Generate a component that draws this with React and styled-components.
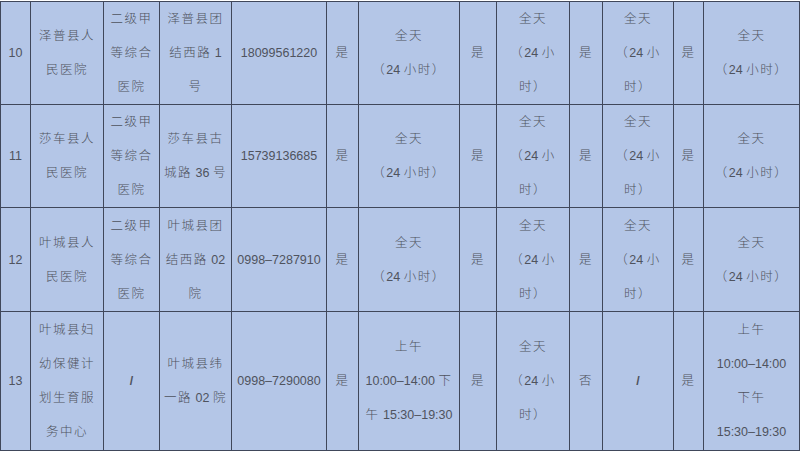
import React from "react";
import styled, { createGlobalStyle } from "styled-components";

const GlobalStyle = createGlobalStyle`
  html, body { margin: 0; padding: 0; background: #ffffff; }
  #root { padding-top: 1px; }
`;

const Table = styled.table`
  border-collapse: collapse;
  table-layout: fixed;
  width: 799px;
  background: #b4c6e7;
  font-family: "Liberation Sans", "Noto Sans CJK SC", sans-serif;
  font-size: 12.5px;
  color: #4f535e;
`;

const Col = styled.col`
  width: ${(p) => p.$w}px;
`;

const Row = styled.tr`
  height: ${(p) => p.$h}px;
`;

const Cell = styled.td`
  border: 1px solid #40475a;
  padding: 0;
  text-align: center;
  vertical-align: middle;
  line-height: 34px;
  white-space: nowrap;
  overflow: hidden;
`;

const Line = styled.div`
  font-weight: ${(p) => (p.$slash ? 700 : 400)};
`;

const Cjk = styled.span`
  letter-spacing: 1.5px;
  font-weight: 300;
`;

const widths = [30, 73, 56, 72, 95, 32, 101, 37, 73, 33, 71, 30, 96];

const full = ["全天", "（24 小时）"];
const split = ["全天", "（24 小", "时）"];

const rows = [
  {
    h: 103,
    cells: [
      ["10"],
      ["泽普县人", "民医院"],
      ["二级甲", "等综合", "医院"],
      ["泽普县团", "结西路 1", "号"],
      ["18099561220"],
      ["是"],
      full,
      ["是"],
      split,
      ["是"],
      split,
      ["是"],
      full,
    ],
  },
  {
    h: 103,
    cells: [
      ["11"],
      ["莎车县人", "民医院"],
      ["二级甲", "等综合", "医院"],
      ["莎车县古", "城路 36 号"],
      ["15739136685"],
      ["是"],
      full,
      ["是"],
      split,
      ["是"],
      split,
      ["是"],
      full,
    ],
  },
  {
    h: 104,
    cells: [
      ["12"],
      ["叶城县人", "民医院"],
      ["二级甲", "等综合", "医院"],
      ["叶城县团", "结西路 02", "院"],
      ["0998–7287910"],
      ["是"],
      full,
      ["是"],
      split,
      ["是"],
      split,
      ["是"],
      full,
    ],
  },
  {
    h: 139,
    cells: [
      ["13"],
      ["叶城县妇", "幼保健计", "划生育服", "务中心"],
      ["/"],
      ["叶城县纬", "一路 02 院"],
      ["0998–7290080"],
      ["是"],
      ["上午", "10:00–14:00 下", "午 15:30–19:30"],
      ["是"],
      split,
      ["否"],
      ["/"],
      ["是"],
      ["上午", "10:00–14:00", "下午", "15:30–19:30"],
    ],
  },
];

const cjkRe = /([\u3000-\u9fff\uff00-\uffef]+)/;

function Text({ value }) {
  const parts = value.split(cjkRe).filter((s) => s !== "");
  return parts.map((part, i) =>
    cjkRe.test(part) ? <Cjk key={i}>{part}</Cjk> : <React.Fragment key={i}>{part}</React.Fragment>
  );
}

export default function App() {
  return (
    <>
      <GlobalStyle />
      <Table>
        <colgroup>
          {widths.map((w, i) => (
            <Col key={i} $w={w} />
          ))}
        </colgroup>
        <tbody>
          {rows.map((row, r) => (
            <Row key={r} $h={row.h}>
              {row.cells.map((lines, c) => (
                <Cell key={c}>
                  {lines.map((l, k) => (
                    <Line key={k} $slash={l === "/"}>
                      <Text value={l} />
                    </Line>
                  ))}
                </Cell>
              ))}
            </Row>
          ))}
        </tbody>
      </Table>
    </>
  );
}
